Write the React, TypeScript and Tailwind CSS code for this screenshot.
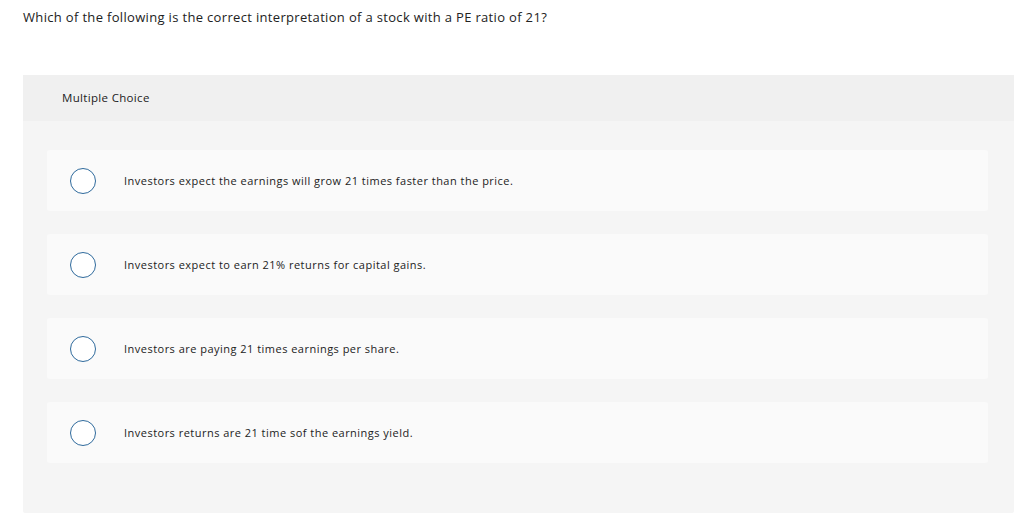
import React from 'react'

const options = [
  'Investors expect the earnings will grow 21 times faster than the price.',
  'Investors expect to earn 21% returns for capital gains.',
  'Investors are paying 21 times earnings per share.',
  'Investors returns are 21 time sof the earnings yield.',
]

export default function App() {
  return (
    <div className="min-h-screen bg-white font-['Open_Sans',sans-serif] text-[#222]">
      <div className="px-[23px] pt-[8px]">
        <p className="text-[13px] leading-[18px] tracking-[0.33px]">
          Which of the following is the correct interpretation of a stock with a PE ratio of 21?
        </p>
      </div>
      <div className="ml-[23px] mr-[10px] mt-[49px] rounded-[2px] bg-[#f5f5f5] pb-[50px]">
        <div className="flex h-[46px] items-center bg-[#f0f0f0] px-[39px] text-[11.5px] tracking-[0.33px]">
          Multiple Choice
        </div>
        <div className="mt-[29px] flex flex-col gap-[23px] pl-[24px] pr-[26px]">
          {options.map(text => (
            <div
              key={text}
              className="flex h-[61px] items-center rounded-[3px] bg-[#fafafa] pl-[23px]"
            >
              <span className="h-[26px] w-[26px] shrink-0 rounded-full border border-[#2f6a9c] bg-white"></span>
              <span className="ml-[28px] pt-[2px] text-[11px] tracking-[0.48px]">{text}</span>
            </div>
          ))}
        </div>
      </div>
    </div>
  )
}
